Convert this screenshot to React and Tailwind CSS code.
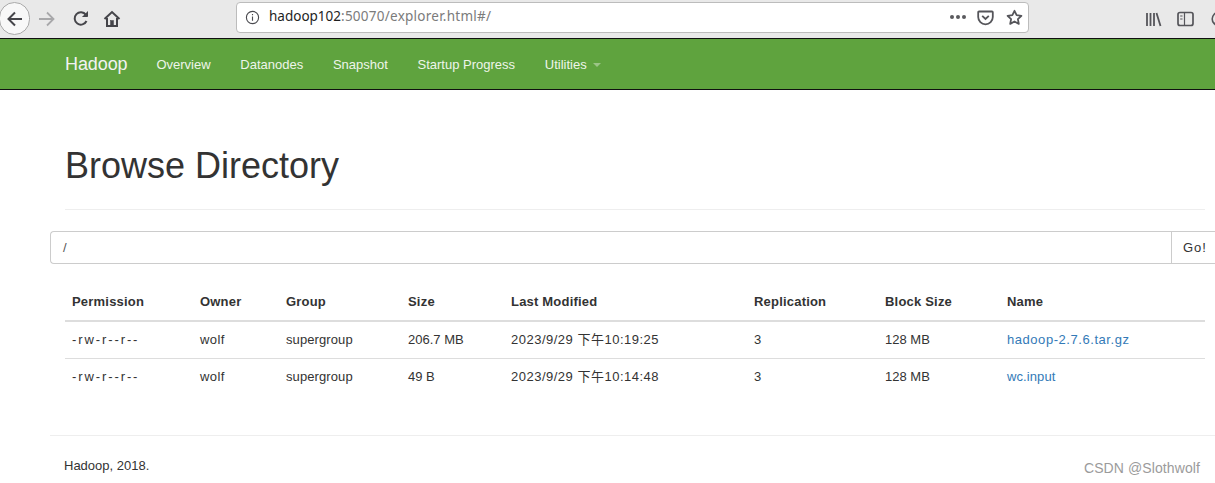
const FONT = "font-['Liberation_Sans',Arial,'Noto_Sans_CJK_SC',sans-serif]";

const rows = [
  { perm: "-rw-r--r--", owner: "wolf", group: "supergroup", size: "206.7 MB", date: "2023/9/29 下午10:19:25", rep: "3", block: "128 MB", name: "hadoop-2.7.6.tar.gz", nameClass: "text-[#337ab7] tracking-[0.55px]" },
  { perm: "-rw-r--r--", owner: "wolf", group: "supergroup", size: "49 B", date: "2023/9/29 下午10:14:48", rep: "3", block: "128 MB", name: "wc.input", nameClass: "text-[#337ab7] tracking-[0.1px]" },
];
const heads = ["Permission", "Owner", "Group", "Size", "Last Modified", "Replication", "Block Size", "Name"];
const widths = [128, 86, 122, 103, 243, 131, 122, 205];

function Toolbar() {
  return (
    <div className="h-[38px] bg-[#e9e9e9] flex items-center shrink-0 relative">
      <div className="w-[31px] h-[33px] -ml-[1px] mt-[-1px] rounded-full bg-[#f8f8f8] border border-[#a9a9a9] flex items-center justify-center shrink-0">
        <svg width="18" height="18" viewBox="0 0 18 18" fill="none" stroke="#45454a" strokeWidth="2"><path d="M16 9H2.5M9 2.5 2.5 9 9 15.500" /></svg>
      </div>
      <svg className="ml-[8px] shrink-0" width="18" height="18" viewBox="0 0 18 18" fill="none" stroke="#a8a8aa" strokeWidth="1.800"><path d="M1 9h14M9 2.500 15.500 9 9 15.500" /></svg>
      <svg className="ml-[16px] shrink-0" width="18" height="18" viewBox="0 0 18 18" fill="none" stroke="#45454a" strokeWidth="2"><path d="M14.500 11a6.200 6.200 0 1 1-.6-6.200" /><path d="M15.500 1.500v5h-5" fill="#45454a" strokeWidth="1" /></svg>
      <svg className="ml-[13px] shrink-0" width="18" height="18" viewBox="0 0 18 18" fill="none" stroke="#45454a" strokeWidth="2"><path d="M1.500 9 9 2l7.500 7" /><path d="M4 8v8h10V8" /><rect x="7.500" y="10.500" width="3" height="5" fill="#45454a" strokeWidth="0.500" /></svg>
      <div className="ml-[115px] w-[793px] h-[31px] mt-[-4px] bg-white border border-[#bcbcbc] rounded-[4px] flex items-center shrink-0">
        <svg className="ml-[8px] shrink-0" width="15" height="15" viewBox="0 0 16 16" fill="none" stroke="#4a4a4f" strokeWidth="1.200"><circle cx="8" cy="8" r="6.500" /><path d="M8 7v4.500M8 4.200v1.300" /></svg>
        <span className="ml-[9px] text-[13.500px] text-[#1e1e1e] font-['Noto_Sans',sans-serif] leading-none">hadoop102<span className="text-[#7b7b7b] tracking-[0.25px]">:50070/explorer.html#/</span></span>
        <div className="ml-auto flex items-center gap-[2px]">
          <span className="w-[4px] h-[4px] rounded-full bg-[#5a5a5e]" />
          <span className="w-[4px] h-[4px] rounded-full bg-[#5a5a5e]" />
          <span className="w-[4px] h-[4px] rounded-full bg-[#5a5a5e]" />
        </div>
        <svg className="ml-[11px] shrink-0" width="17" height="17" viewBox="0 0 17 17" fill="none" stroke="#55555a" strokeWidth="1.800"><path d="M2 2.500h13a.8.800 0 0 1 .8.8v4.700a7.300 7.300 0 0 1-14.600 0V3.300A.8.800 0 0 1 2 2.500Z" /><path d="M5.200 6.800 8.500 10l3.300-3.200" /></svg>
        <svg className="ml-[12px] mr-[5px] shrink-0" width="17" height="17" viewBox="0 0 17 17" fill="none" stroke="#55555a" strokeWidth="1.800" strokeLinejoin="round"><path d="m8.500 1.800 2.100 4.400 4.800.6-3.500 3.300.9 4.800-4.300-2.400-4.300 2.400.9-4.800L1.600 6.800l4.800-.6Z" /></svg>
      </div>
      <svg className="ml-[116px] shrink-0" width="17" height="16" viewBox="0 0 17 16" fill="none" stroke="#55555a" strokeWidth="1.800"><path d="M2 2v13M5.500 2v13M9 2v13M11.500 2l4 13" /></svg>
      <svg className="ml-[15px] shrink-0" width="17" height="16" viewBox="0 0 17 16" fill="none" stroke="#55555a" strokeWidth="1.700"><rect x="1" y="1.500" width="15" height="13" rx="2" /><path d="M7.500 1.500v13M3.200 5h2.300M3.200 8h2.300" strokeWidth="1.200" /></svg>
      <svg className="ml-[17px] shrink-0" width="16" height="16" viewBox="0 0 16 16" fill="none" stroke="#55555a" strokeWidth="1.600"><circle cx="8" cy="8" r="6.800" /><circle cx="8" cy="6.500" r="2" /><path d="M3.500 13c1-2 3-2.800 4.500-2.800S11.500 11 12.500 13" /></svg>
    </div>
  );
}

function Navbar() {
  const items = ["Overview", "Datanodes", "Snapshot", "Startup Progress"];
  return (
    <nav className="h-[52px] bg-[#5fa33e] border-y border-y-[#101010] flex items-center pl-[65px] text-white shrink-0">
      <span className="text-[18px] text-[#f2f2f2] mr-[29px] leading-none tracking-[-0.1px]">Hadoop</span>
      <div className="flex items-center gap-[29.700px] text-[13px] text-[#eef5ea] pt-[1px]">
        {items.map((i) => <span key={i}>{i}</span>)}
        <span className="flex items-center">
          Utilities
          <span className="ml-[6px] mt-[1px] w-0 h-0 border-x-[4px] border-x-transparent border-t-[4px] border-t-[#9cc487]" />
        </span>
      </div>
    </nav>
  );
}

export default function App() {
  return (
    <div className={`w-[1215px] h-[483px] overflow-hidden bg-white relative flex flex-col ${FONT} text-[#333]`}>
      <Toolbar />
      <Navbar />
      <main className="flex-1 flex flex-col">
        <div className="ml-[65px] mr-[10px] mt-[56px] h-[64px] border-b border-b-[#eeeeee] shrink-0">
          <h1 className="text-[36px] leading-[40px] text-[#333]">Browse Directory</h1>
        </div>
        <div className="ml-[50px] mt-[21px] h-[33px] flex shrink-0 border border-r-0 border-[#cccccc] rounded-l-[4px] text-[13px]">
          <span className="flex-1 pl-[12px] flex items-center text-[#555]">/</span>
          <span className="w-[44px] border-l border-l-[#cccccc] flex items-center pl-[11px] tracking-[1px] text-[#333]">Go!</span>
        </div>
        <table className="ml-[65px] mt-[18px] w-[1140px] table-fixed border-collapse text-[13px] shrink-0">
          <colgroup>
            {widths.map((w, i) => <col key={i} style={{ width: w }} />)}
          </colgroup>
          <thead>
            <tr className="h-[39px] border-b-2 border-b-[#dddddd]">
              {heads.map((h) => <th key={h} className="pl-[7px] pt-[2px] text-left font-bold text-[#333] tracking-[0.2px]">{h}</th>)}
            </tr>
          </thead>
          <tbody>
            {rows.map((r, idx) => (
              <tr key={idx} className={idx === 0 ? "h-[37px] border-b border-b-[#dddddd]" : "h-[37px]"}>
                <td className="pl-[7px] tracking-[1.9px]">{r.perm}</td>
                <td className="pl-[7px] tracking-[0.4px]">{r.owner}</td>
                <td className="pl-[7px] tracking-[0.1px]">{r.group}</td>
                <td className="pl-[7px]">{r.size}</td>
                <td className="pl-[7px] whitespace-nowrap tracking-[0.5px]">{r.date}</td>
                <td className="pl-[7px]">{r.rep}</td>
                <td className="pl-[7px]">{r.block}</td>
                <td className="pl-[7px]"><a className={r.nameClass}>{r.name}</a></td>
              </tr>
            ))}
          </tbody>
        </table>
        <div className="ml-[50px] mt-[40px] border-t border-t-[#eeeeee] pt-[21px] pl-[14px] text-[13px] text-[#333] leading-[18px] shrink-0">Hadoop, 2018.</div>
      </main>
      <span className="absolute right-[15px] top-[459px] text-[14px] leading-[18px] tracking-[0.1px] text-[#9b9b9b]">CSDN @Slothwolf</span>
    </div>
  );
}
